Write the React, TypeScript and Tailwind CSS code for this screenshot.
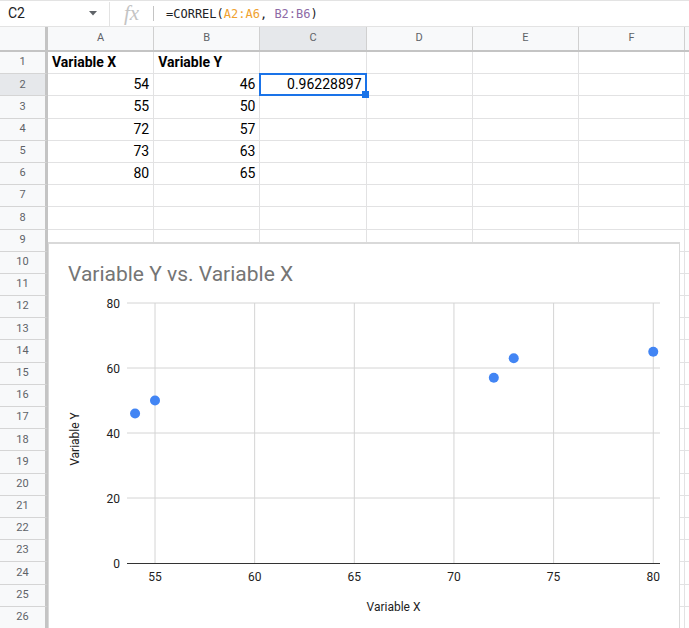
import React from "react";

const COLS = ["A", "B", "C", "D", "E", "F", "G"];
const DATA: (string | number)[][] = [
  ["Variable X", "Variable Y"],
  [54, 46],
  [55, 50],
  [72, 57],
  [73, 63],
  [80, 65],
];
const POINTS = [
  [54, 46],
  [55, 50],
  [72, 57],
  [73, 63],
  [80, 65],
];

const px = (v: number) => 107 + (v - 55) * 19.93;
const py = (v: number) => 321 - v * 3.25;

function FormulaBar() {
  return (
    <div className="h-[27px] flex items-center border-t border-b border-[#e3e3e3] text-[#202124]">
      <div className="w-[109px] flex items-center pl-2 pr-2 h-full">
        <span className="text-[14px] flex-1">C2</span>
        <svg width="8" height="5" viewBox="0 0 8 5" className="mr-1">
          <path d="M0 0h8L4 4.5z" fill="#5f6368" />
        </svg>
      </div>
      <div className="w-px h-[24px] bg-[#e3e3e3]" />
      <div className="w-[43px] flex items-center justify-center">
        <span className="font-['Liberation_Serif'] italic text-[21px] text-[#c4c4c4] leading-none">
          fx
        </span>
      </div>
      <div className="w-px h-[15px] bg-[#c4c4c4]" />
      <div className="pl-[12px] font-['DejaVu_Sans_Mono',monospace] text-[12px] whitespace-pre">
        =CORREL(<span className="text-[#f0a22f]">A2:A6</span>,{" "}
        <span className="text-[#8e6aa6]">B2:B6</span>)
      </div>
    </div>
  );
}

function HeaderRow() {
  return (
    <div className="flex h-[25px] border-b-2 border-[#c4c4c4] bg-[#f8f9fa]">
      <div className="w-[48px] shrink-0 border-r-[3px] border-[#c4c4c4]" />
      {COLS.map((c) => (
        <div
          key={c}
          className={
            "w-[106.2px] shrink-0 border-r border-[#d0d0d0] flex items-center justify-center text-[11px] text-[#5f6368] " +
            (c === "C" ? "bg-[#e6e8eb]" : "")
          }
        >
          {c}
        </div>
      ))}
    </div>
  );
}

function Row({ n }: { n: number }) {
  const vals = DATA[n - 1] || [];
  return (
    <div className="flex h-[22.2px]">
      <div
        className={
          "w-[48px] shrink-0 border-r-[3px] border-b border-r-[#c4c4c4] border-b-[#d5d5d5] flex items-center justify-center text-[11px] text-[#5f6368] " +
          (n === 2 ? "bg-[#e6e8eb]" : "bg-[#f8f9fa]")
        }
      >
        {n}
      </div>
      {COLS.map((c, i) => {
        let v: string | number | undefined = vals[i];
        if (n === 2 && c === "C") v = "0.96228897";
        const isNum = typeof v === "number" || (n === 2 && c === "C");
        return (
          <div
            key={c}
            className={
              "relative w-[106.2px] shrink-0 border-r border-b border-[#e2e2e3] flex items-center px-[4px] text-[14px] text-black " +
              (isNum ? "justify-end" : "") +
              (n === 1 ? " font-bold" : "")
            }
          >
            {v}
            {n === 2 && c === "C" && (
              <div className="absolute z-10 -left-px -top-px w-[107.2px] h-[23.2px] border-2 border-[#1a73e8]">
                <div className="absolute -right-[4px] -bottom-[4px] w-[7px] h-[7px] bg-[#1a73e8]" />
              </div>
            )}
          </div>
        );
      })}
    </div>
  );
}

function Chart() {
  const xs = [55, 60, 65, 70, 75, 80];
  const ys = [80, 60, 40, 20];
  return (
    <div className="absolute z-20 left-[48px] top-[242px] w-[632px] h-[420px] bg-white border border-[#d9d9d9] border-t-2">
      <svg width="632" height="420" className="block -mt-[2px] -ml-px" fontFamily="Roboto, sans-serif">
        <text x="20" y="39" fontSize="21" fill="#757575">
          Variable Y vs. Variable X
        </text>
        {xs.map((x) => (
          <line key={x} x1={px(x)} x2={px(x)} y1={61} y2={321} stroke="#d4d4d4" strokeWidth="1" />
        ))}
        {ys.map((y) => (
          <line key={y} x1={79} x2={612} y1={py(y)} y2={py(y)} stroke="#d4d4d4" strokeWidth="1" />
        ))}
        <line x1={79} x2={612} y1={321.5} y2={321.5} stroke="#333" strokeWidth="1" />
        {[80, 60, 40, 20, 0].map((y) => (
          <text key={y} x={72} y={py(y) + 4.5} fontSize="12" fill="#222" textAnchor="end">
            {y}
          </text>
        ))}
        {xs.map((x) => (
          <text key={x} x={px(x)} y={338.5} fontSize="12" fill="#222" textAnchor="middle">
            {x}
          </text>
        ))}
        <text x={345.5} y={369} fontSize="12" fill="#222" textAnchor="middle">
          Variable X
        </text>
        <text
          x={0}
          y={0}
          fontSize="12"
          fill="#222"
          textAnchor="middle"
          transform="translate(30.5 197) rotate(-90)"
        >
          Variable Y
        </text>
        {POINTS.map(([x, y]) => (
          <circle key={x} cx={px(x)} cy={py(y)} r="5" fill="#4285f4" />
        ))}
      </svg>
    </div>
  );
}

export default function App() {
  return (
    <div className="relative w-[689px] h-[628px] overflow-hidden bg-white font-['Roboto',sans-serif]">
      <FormulaBar />
      <HeaderRow />
      {Array.from({ length: 27 }, (_, i) => (
        <Row key={i} n={i + 1} />
      ))}
      <Chart />
    </div>
  );
}
